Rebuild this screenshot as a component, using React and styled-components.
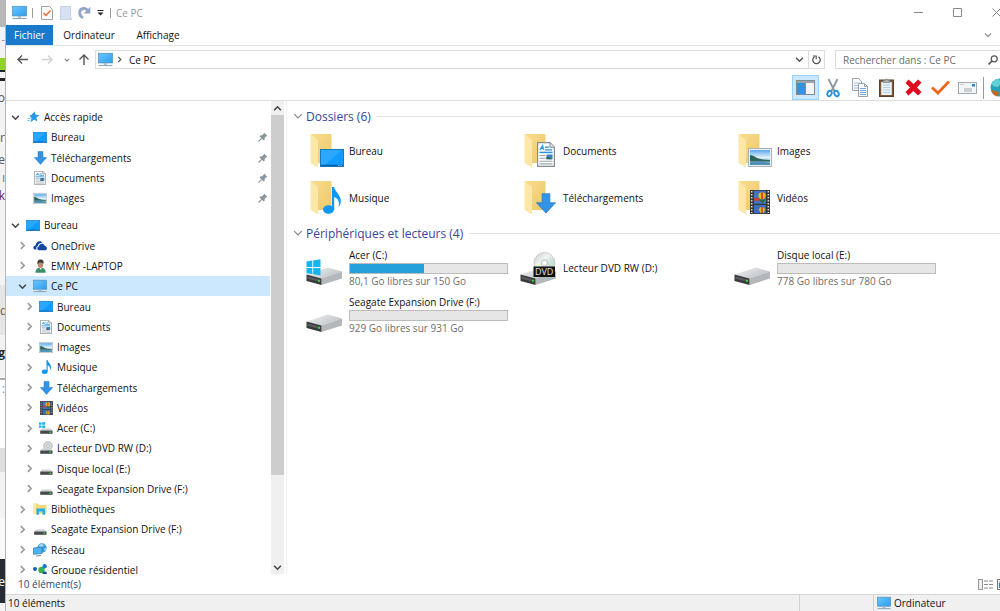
import React from 'react'
import styled, { createGlobalStyle, css } from 'styled-components'

const GlobalStyle = createGlobalStyle`
  * {
    box-sizing: border-box;
  }
  body {
    margin: 0;
    background: #fff;
    font-family: "Open Sans", "Noto Sans", sans-serif;
    font-size: 10px;
    color: #111;
    overflow: hidden;
  }
  button, input {
    font: inherit;
    color: inherit;
    margin: 0;
    padding: 0;
    border: 0;
    background: none;
  }
  ul {
    list-style: none;
    margin: 0;
    padding: 0;
  }
  svg {
    display: block;
    flex-shrink: 0;
  }
`;

//icons
const Chevron = ({ dir = 'down', size = 8, color = '#555', width = 1.4 }) => {
  const d = {
    down: 'M1 2.5 L4 5.5 L7 2.5',
    up: 'M1 5.5 L4 2.5 L7 5.5',
    right: 'M2.5 1 L5.5 4 L2.5 7',
  }[dir]
  return (
    <svg width={size} height={size} viewBox="0 0 8 8">
      <path d={d} fill="none" stroke={color} strokeWidth={width} />
    </svg>
  )
}

const MonitorIcon = ({ size = 14 }) => (
  <svg width={size} height={size} viewBox="0 0 14 14">
    <defs>
      <linearGradient id="screen" x1="0" y1="0" x2="1" y2="1">
        <stop offset="0" stopColor="#6cc8ff" />
        <stop offset="1" stopColor="#2a9df0" />
      </linearGradient>
    </defs>
    <rect x="0.5" y="1.2" width="13" height="9" fill="url(#screen)" stroke="#4f8fb8" strokeWidth="0.7" />
    <path d="M5.5 10.5h3v1.4h-3z" fill="#9fb4c2" />
    <path d="M0.5 12.6h13" stroke="#8fa9ba" strokeWidth="1.1" />
  </svg>
)

const DesktopIcon = ({ w = 14, h = 11 }) => (
  <svg width={w} height={h} viewBox="0 0 24 17" preserveAspectRatio="none">
    <rect x="0.5" y="0.5" width="23" height="16" fill="#0f9bff" stroke="#1679c4" />
    <path d="M1 1h21L5 15H1z" fill="#2aa8ff" />
    <path d="M1 15.5h22" stroke="#0b5e9e" strokeWidth="1.2" />
    <path d="M18 15.5h4" stroke="#9ed6ff" strokeWidth="0.8" strokeDasharray="1 0.6" />
  </svg>
)

const ArrowIcon = ({ w = 13, h = 14 }) => (
  <svg width={w} height={h} viewBox="0 0 13 14" preserveAspectRatio="none">
    <path d="M4 0.5h5v6h3.7L6.5 13.4 0.3 6.5H4z" fill="#3393e6" stroke="#2379c8" strokeWidth="0.5" />
  </svg>
)

const NoteIcon = ({ w = 13, h = 14 }) => (
  <svg width={w} height={h} viewBox="0 0 18 27">
    <ellipse cx="5.5" cy="22.5" rx="5.5" ry="4.3" fill="#0d98f5" />
    <path d="M9 0h2.2c0.5 5 7 7.5 6.6 14.5c-0.2 3-1.4 4.5-2.3 5.5c1.5-5-0.5-9-4.3-10v13H9z" fill="#0d98f5" />
  </svg>
)

const DocIcon = ({ w = 12, h = 14 }) => (
  <svg width={w} height={h} viewBox="0 0 18 24" preserveAspectRatio="none">
    <path d="M0.6 0.6h12.4l4.4 4.4v18.4H0.6z" fill="#fcfdfd" stroke="#858e93" strokeWidth="1.2" />
    <path d="M13 0.6v4.4h4.4" fill="#dfe5e8" stroke="#858e93" />
    <path d="M3 7.5L5.6 3.5 6.6 7.5M4 6.2h2.5M8 5h4M8 7.5h7" stroke="#2b94dc" strokeWidth="1.2" fill="none" />
    <path d="M2.5 10h13" stroke="#2b94dc" strokeWidth="1.4" />
    <path d="M2.5 13h6M2.5 15.5h6M2.5 18.5h13M2.5 21h13" stroke="#9aa5ab" />
    <rect x="9.5" y="12" width="6" height="4.5" fill="#3c84bd" />
    <path d="M9.5 16.5v-2l3 0.3 3 1.7z" fill="#2f5f4a" />
  </svg>
)

const PictureIcon = ({ w = 14, h = 11 }) => (
  <svg width={w} height={h} viewBox="0 0 24 19" preserveAspectRatio="none">
    <defs>
      <linearGradient id="sky" x1="0" y1="0" x2="0" y2="1">
        <stop offset="0" stopColor="#5ea6ea" />
        <stop offset="0.5" stopColor="#e0f1fb" />
        <stop offset="1" stopColor="#4f93b5" />
      </linearGradient>
    </defs>
    <rect x="0.5" y="0.5" width="23" height="18" fill="#eef1f3" stroke="#a9b1b6" />
    <rect x="2" y="2" width="20" height="15" fill="url(#sky)" />
    <path d="M2 7c4 0 6 3.5 13 4.5L22 12v1.5H2z" fill="#316458" />
    <path d="M2 14l9-1 11 2v2H2z" fill="#4f90b4" />
  </svg>
)

const FilmIcon = ({ w = 13, h = 14 }) => (
  <svg width={w} height={h} viewBox="0 0 20 24" preserveAspectRatio="none">
    <rect width="20" height="24" fill="#373737" />
    <path d="M1.7 1v22M18.3 1v22" stroke="#d8d8d8" strokeWidth="1.5" strokeDasharray="1.6 1.4" />
    <rect x="4" y="0.8" width="12" height="13" fill="#3f74c9" />
    <rect x="4" y="15" width="12" height="8.2" fill="#3c6ec0" />
    <path d="M4 8h4.500l1.500 2.800H4z" fill="#d63d31" />
    <path d="M8.300 5.500C8.300 1 15.700 1 15.700 5.500c0 1.800-1.500 3.200-2.300 4h-2.800c-0.800-0.800-2.300-2.200-2.300-4z" fill="#e8b91c" />
    <path d="M12 2.200v7.300" stroke="#cf3428" strokeWidth="1.600" />
    <path d="M8.500 9.500h7l-3 4z" fill="#2e6d38" />
    <path d="M9 20c0-4 6-4 6 0l-1.500 3h-3z" fill="#e8b91c" />
    <path d="M12 17v6" stroke="#cf3428" strokeWidth="1.400" />
  </svg>
)

const SmallDriveIcon = ({ kind }) => (
  <svg width="14" height="14" viewBox="0 0 14 14">
    {kind === 'dvd' && (
      <g>
        <circle cx="9" cy="5" r="4.3" fill="#d5d9db" stroke="#a5abae" strokeWidth="0.7" />
        <circle cx="9" cy="5" r="1.4" fill="#fff" stroke="#999" strokeWidth="0.6" />
      </g>
    )}
    {kind === 'win' && <path d="M0 1.5h2.6v2.300H0zM3.200 1.200h3v2.600h-3zM0 4.400h2.600v2.300H0zM3.200 4.400h3v2.600h-3z" fill="#18b4ee" />}
    <path d="M3 7.5h8.5L13.500 9.500H1.300z" fill="#ccd0d2" />
    <rect x="1.2" y="9.500" width="12.300" height="3.300" fill="#454a4c" />
    <rect x="10.500" y="10.500" width="1.600" height="1.300" fill="#3fe04b" />
  </svg>
)

const DriveIcon = ({ kind }) => (
  <svg width="38" height="36" viewBox="0 0 38 36">
    <defs>
      <linearGradient id="drv" x1="0" y1="0" x2="1" y2="0.6">
        <stop offset="0" stopColor="#f1f2f3" />
        <stop offset="1" stopColor="#c0c3c7" />
      </linearGradient>
      <linearGradient id="disc" x1="0" y1="0" x2="1" y2="1">
        <stop offset="0" stopColor="#c8cdd0" />
        <stop offset="0.4" stopColor="#f1f4f2" />
        <stop offset="0.6" stopColor="#cfe3da" />
        <stop offset="1" stopColor="#c3c7cc" />
      </linearGradient>
    </defs>
    <path d="M0.5 24.5L22 17.5 36 21.5 15.5 28.5z" fill="url(#drv)" />
    <path d="M15.5 28.5L36 21.500v7L15.500 35z" fill="#b4b7bb" />
    <path d="M0.5 24.5L15.500 28.500V35L0.500 31z" fill="#383a3c" />
    <path d="M1.500 26.500l10 2.600v2.200l-10-2.600z" fill="#5b5e61" />
    <circle cx="13" cy="30.800" r="1.200" fill="#2fd63d" />
    {kind === 'win' && <path d="M0.500 11.500l5.800-0.900v6.400H0.500zM7.200 10.400l7.300-1.200v7.800H7.200zM0.500 17.900h5.800v6.200l-5.800-0.900zM7.200 17.900h7.300v7.500l-7.300-1.100z" fill="#12b5f0" />}
    {kind === 'dvd' && (
      <g>
        <circle cx="24.500" cy="13" r="10.500" fill="url(#disc)" stroke="#b9bec1" strokeWidth="0.700" />
        <circle cx="24.500" cy="13" r="3.300" fill="#e9ecec" stroke="#b1b6b9" strokeWidth="0.700" />
        <circle cx="24.500" cy="13" r="1.300" fill="#fff" />
        <rect x="13.500" y="16.500" width="21.500" height="10.500" fill="#111" />
        <text x="24.200" y="25" fontSize="9" textAnchor="middle" fill="#e6e6e6" fontFamily="Open Sans, sans-serif">DVD</text>
      </g>
    )}
  </svg>
)

const StarIcon = () => (
  <svg width="13" height="12" viewBox="0 0 13 12">
    <path d="M7.5 0.5l1.2 3.3 3.8 0.2-3 2.4 0.8 4-3.3-2-3.5 2.6 1.2-3.8L3 5.5" fill="#2a9ae6" />
    <path d="M7.5 0.5l-1.5 3.4-3.7 0.4 2.7 2.500-1.500 4.200 4-3z" fill="#2a9ae6" />
    <path d="M0.500 7.500h3M0.500 9.500h2.500" stroke="#7fc4f2" />
  </svg>
)

const CloudIcon = () => (
  <svg width="14" height="11" viewBox="0 0 14 11">
    <path d="M0.3 7.8c0-1.5 1-2.4 2.2-2.4C2.8 3 4.5 1.3 6.5 1.3c1.2 0 2.2 0.5 3 1.4-3.5 0-4.6 2.3-4.6 3.4C3.5 6.5 3 8 3.5 9.5 1.5 9.9 0.3 9 0.3 7.8z" fill="#0f47a5" />
    <path d="M4.3 8.3c0-1.2 0.8-1.8 1.6-1.9C6.2 4.7 7.4 3.7 9 3.7s2.5 1 2.8 2.4c1.3 0.1 2.1 1 2.1 2.1S13.1 10.3 12 10.3H6.3c-1.2 0-2-0.9-2-2z" fill="#0f47a5" />
  </svg>
)

const UserIcon = () => (
  <svg width="13" height="14" viewBox="0 0 13 14">
    <path d="M1.5 13.8c0-4 2-5 5-5s5.2 1 5.2 5z" fill="#3d8f6c" />
    <path d="M5.2 8.5l1.5 2.5 1.5-2.5z" fill="#eee" />
    <ellipse cx="6.5" cy="5.5" rx="2.7" ry="3.5" fill="#b98c6d" />
    <path d="M3.5 5.5c-0.5-4 1-5 3.2-5s3.3 1.5 2.8 4C8 4 6 3 4.7 4z" fill="#3f3a35" />
  </svg>
)

const LibraryIcon = () => (
  <svg width="14" height="12" viewBox="0 0 14 12">
    <path d="M0.5 0.5h4l1 1.5H13.5v9h-13z" fill="#f8d775" />
    <path d="M0.5 0.5h2.5v11H0.5z" fill="#fbe9a8" />
    <path d="M3.5 11.8V5.5h8.5v6.3H9.5V8.5H6v3.3z" fill="#26aee8" />
  </svg>
)

const NetworkIcon = () => (
  <svg width="14" height="14" viewBox="0 0 14 14">
    <circle cx="9" cy="5" r="4.7" fill="#3b9ad9" />
    <path d="M6 2c2-1.5 4-1 5 0.5L9 4 6.5 4zM11 6l2-1.5c0.5 1.5 0 3-1 4z" fill="#a8daf5" />
    <path d="M0.5 5l8.5-1v6.5l-8.5 0.8z" fill="#4fb2f0" stroke="#2776b0" strokeWidth="0.7" />
    <path d="M3 13l5-0.6" stroke="#7d96a5" strokeWidth="1.2" />
  </svg>
)

const HomegroupIcon = () => (
  <svg width="14" height="12" viewBox="0 0 14 12">
    <circle cx="2" cy="5" r="2" fill="#1561b0" />
    <circle cx="8.5" cy="6" r="3.2" fill="#37b24a" />
    <circle cx="11.7" cy="2.3" r="2.2" fill="#1a7bc8" />
    <circle cx="11.7" cy="9.6" r="2.2" fill="#124f9c" />
  </svg>
)

const PinIcon = () => (
  <svg width="10" height="10" viewBox="0 0 10 10">
    <path d="M6 0.5L9.5 4 8.2 4.3 6.7 5.8 6.6 8 5.6 8.4 1.6 4.4 2 3.4 4.2 3.3 5.7 1.8z" fill="#8a949b" />
    <path d="M3.6 6.4L0.5 9.5" stroke="#8a949b" strokeWidth="1.1" />
  </svg>
)

const FolderWrap = styled.span`
  position: relative;
  flex: 0 0 38px;
`;

const FolderBadge = styled.span`
  position: absolute;
  right: 0;
  bottom: 3px;
  width: 24px;
  display: flex;
  justify-content: center;
`;

const FolderIcon = ({ children }) => (
  <FolderWrap>
    <svg width="38" height="38" viewBox="0 0 38 38">
      <defs>
        <linearGradient id="folder" x1="0" y1="0" x2="1" y2="1">
          <stop offset="0" stopColor="#f9dd8d" />
          <stop offset="1" stopColor="#edc76a" />
        </linearGradient>
      </defs>
      <path d="M5 2h20.500v29H10z" fill="url(#folder)" />
      <path d="M4.500 2l7.500 6v27.500L4.500 31z" fill="#fde7a6" />
    </svg>
    <FolderBadge>{children}</FolderBadge>
  </FolderWrap>
)

//layout
const Screen = styled.div`
  display: flex;
  min-height: 100vh;
  overflow: hidden;
`;

const Behind = styled.div`
  flex: 0 0 6px;
  display: flex;
  flex-direction: column;
  overflow: hidden;
  border-right: 1px solid #b4b4b4;
  background: #f3f3f3;
`;

const BehindPart = styled.div`
  flex: 0 0 ${p => p.$h}px;
  display: flex;
  align-items: center;
  justify-content: ${p => p.$align || 'flex-end'};
  overflow: hidden;
  white-space: nowrap;
  font-size: 12px;
  font-weight: ${p => (p.$bold ? 700 : 400)};
  color: ${p => p.$color || '#555'};
  background: ${p => p.$bg || 'transparent'};
`;

const Window = styled.div`
  flex: 1;
  min-width: 0;
  display: flex;
  flex-direction: column;
  overflow: hidden;
`;

const TitleBar = styled.header`
  display: flex;
  align-items: center;
  height: 25px;
  padding-left: 6px;
`;

const QuickButton = styled.button`
  display: flex;
  align-items: center;
  justify-content: center;
  width: ${p => p.$w || 19}px;
  height: 20px;
`;

const Divider = styled.span`
  width: 1px;
  height: ${p => p.$h || 10}px;
  margin: ${p => p.$m || '0'};
  background: #9a9a9a;
`;

const WindowTitle = styled.span`
  color: #999;
`;

const WindowButtons = styled.div`
  display: flex;
  margin: 0 -16px 0 auto;
`;

const WindowButton = styled.button`
  display: flex;
  align-items: center;
  justify-content: center;
  width: 39px;
  height: 24px;
`;

const Tabs = styled.nav`
  display: flex;
  align-items: stretch;
  height: 21px;
  border-bottom: 1px solid #e2e3e4;
`;

const Tab = styled.button`
  width: ${p => p.$w}px;
  ${p => p.$active && css`
    background: #1979ca;
    color: #fff;
  `}
`;

const TabsToggle = styled.button`
  display: flex;
  align-items: center;
  margin: 0 8px 0 auto;
`;

const AddressRow = styled.div`
  display: flex;
  align-items: center;
  height: 27px;
`;

const NavButton = styled.button`
  display: flex;
  align-items: center;
  justify-content: center;
  width: ${p => p.$w}px;
  height: 17px;
`;

const AddressBox = styled.div`
  flex: 1;
  display: flex;
  align-items: center;
  height: 19px;
  margin-left: 5px;
  padding-left: 2px;
  border: 1px solid #dcdcdc;
`;

const Crumb = styled.button`
  padding: 0 4px;
`;

const AddressActions = styled.div`
  display: flex;
  align-items: center;
  margin-left: auto;
`;

const RefreshButton = styled(NavButton)`
  border-left: 1px solid #dcdcdc;
`;

const SearchBox = styled.label`
  display: flex;
  align-items: center;
  width: 169px;
  height: 19px;
  margin: 0 -4px 0 10px;
  padding: 0 5px 0 7px;
  border: 1px solid #dcdcdc;
  input {
    flex: 1;
    min-width: 0;
    outline: none;
  }
  input::placeholder {
    color: #6d6d6d;
    opacity: 1;
  }
`;

const Toolbar = styled.div`
  display: flex;
  align-items: flex-end;
  justify-content: flex-end;
  height: 27px;
  margin-right: -13px;
`;

const Tool = styled.button`
  display: flex;
  align-items: center;
  justify-content: center;
  width: 27px;
  height: 25px;
  ${p => p.$active && css`
    background: #cce8ff;
    border: 1px solid #99d1ff;
  `}
`;

const Main = styled.main`
  flex: 1;
  display: flex;
  min-height: 0;
  border-top: 1px solid #dedede;
`;

const TreePane = styled.nav`
  display: flex;
  flex: 0 0 265px;
  height: 473px;
  overflow: hidden;
`;

const TreeList = styled.ul`
  flex: 1;
  display: flex;
  flex-direction: column;
  height: calc(100% + 6px);
  padding-top: 6px;
`;

const TreeItem = styled.li`
  flex: 1;
  display: flex;
  align-items: center;
  min-height: 20px;
  margin-top: ${p => (p.$gap ? 7 : 0)}px;
  margin-right: 1px;
  padding-left: ${p => p.$level * 7 + 5}px;
  background: ${p => (p.$active ? '#cce8ff' : 'transparent')};
`;

const TreeToggle = styled.button`
  display: flex;
  width: 9px;
  margin-right: ${p => p.$push}px;
  visibility: ${p => (p.$hidden ? 'hidden' : 'visible')};
`;

const TreeIcon = styled.span`
  display: flex;
  align-items: center;
  justify-content: center;
  width: 14px;
  height: 14px;
  margin-right: 4px;
`;

const TreeLabel = styled.span`
  flex: 1;
  white-space: nowrap;
`;

const PinSlot = styled.span`
  margin-right: 2px;
`;

const ScrollBar = styled.div`
  flex: 0 0 13px;
  display: flex;
  flex-direction: column;
  align-self: flex-start;
  height: 473px;
  margin-right: 2px;
  background: #f0f0f0;
`;

const ScrollButton = styled.button`
  display: flex;
  align-items: center;
  justify-content: center;
  height: 14px;
`;

const ScrollTrack = styled.div`
  flex: 1;
  &::before {
    content: '';
    display: block;
    height: 81%;
    background: #cdcdcd;
  }
`;

const Content = styled.div`
  flex: 1;
  min-width: 0;
  padding: 4px 0 0 6px;
  border-left: 1px solid #f0f0f0;
`;

const SectionTitle = styled.h2`
  display: flex;
  align-items: center;
  gap: 3px;
  height: 22px;
  margin: 0;
  font-size: 12px;
  font-weight: 400;
  color: #36459c;
  white-space: nowrap;
  &::after {
    content: '';
    flex: 1;
    height: 1px;
    margin-left: 3px;
    background: #e4e4e4;
  }
`;

const Grid = styled.ul`
  display: grid;
  grid-template-columns: repeat(auto-fill, 214px);
  grid-auto-rows: 47px;
  padding: 0 0 1px 13px;
`;

const Cell = styled.li`
  display: flex;
  align-items: center;
  gap: 5px;
  white-space: nowrap;
`;

const DriveInfo = styled.div`
  width: 159px;
  line-height: 16px;
`;

const Meter = styled.div`
  height: 11px;
  border: 1px solid #bcbcbc;
  background: #e6e6e6;
`;

const MeterFill = styled.div`
  height: 100%;
  background: #26a0da;
`;

const Free = styled.div`
  line-height: 14px;
  color: #6d6d6d;
`;

const CountBar = styled.div`
  display: flex;
  align-items: center;
  height: 20px;
  padding-left: 12px;
  color: #2b4a76;
`;

const ViewButtons = styled.div`
  display: flex;
  gap: 4px;
  margin: 0 -12px 0 auto;
`;

const StatusBar = styled.footer`
  display: flex;
  align-items: center;
  height: 17px;
  padding-left: 2px;
  border-top: 1px solid #d6d6d6;
  background: #f0f0f0;
`;

const StatusCell = styled.span`
  display: flex;
  align-items: center;
  gap: 3px;
  width: ${p => p.$w}px;
  height: 16px;
  padding-left: 3px;
  border-left: 1px solid #d2d2d2;
`;

const Spacer = styled.span`
  flex: 1;
`;

//data
const icons = {
  star: <StarIcon />,
  desktop: <DesktopIcon />,
  download: <ArrowIcon />,
  doc: <DocIcon />,
  picture: <PictureIcon />,
  music: <NoteIcon />,
  film: <FilmIcon />,
  cloud: <CloudIcon />,
  user: <UserIcon />,
  pc: <MonitorIcon />,
  win: <SmallDriveIcon kind="win" />,
  dvd: <SmallDriveIcon kind="dvd" />,
  drive: <SmallDriveIcon />,
  library: <LibraryIcon />,
  network: <NetworkIcon />,
  group: <HomegroupIcon />,
}

const tree = [
  { label: 'Accès rapide', icon: 'star', level: 0, open: true },
  { label: 'Bureau', icon: 'desktop', level: 1, pin: true },
  { label: 'Téléchargements', icon: 'download', level: 1, pin: true },
  { label: 'Documents', icon: 'doc', level: 1, pin: true },
  { label: 'Images', icon: 'picture', level: 1, pin: true },
  { label: 'Bureau', icon: 'desktop', level: 0, open: true, gap: true },
  { label: 'OneDrive', icon: 'cloud', level: 1 },
  { label: 'EMMY -LAPTOP', icon: 'user', level: 1 },
  { label: 'Ce PC', icon: 'pc', level: 1, open: true, active: true },
  { label: 'Bureau', icon: 'desktop', level: 2 },
  { label: 'Documents', icon: 'doc', level: 2 },
  { label: 'Images', icon: 'picture', level: 2 },
  { label: 'Musique', icon: 'music', level: 2 },
  { label: 'Téléchargements', icon: 'download', level: 2 },
  { label: 'Vidéos', icon: 'film', level: 2 },
  { label: 'Acer (C:)', icon: 'win', level: 2 },
  { label: 'Lecteur DVD RW (D:)', icon: 'dvd', level: 2 },
  { label: 'Disque local (E:)', icon: 'drive', level: 2 },
  { label: 'Seagate Expansion Drive (F:)', icon: 'drive', level: 2 },
  { label: 'Bibliothèques', icon: 'library', level: 1 },
  { label: 'Seagate Expansion Drive (F:)', icon: 'drive', level: 1 },
  { label: 'Réseau', icon: 'network', level: 1 },
  { label: 'Groupe résidentiel', icon: 'group', level: 1 },
]

const folders = [
  { label: 'Bureau', badge: <DesktopIcon w={24} h={18} /> },
  { label: 'Documents', badge: <DocIcon w={18} h={25} /> },
  { label: 'Images', badge: <PictureIcon w={24} h={19} /> },
  { label: 'Musique', badge: <NoteIcon w={18} h={27} /> },
  { label: 'Téléchargements', badge: <ArrowIcon w={20} h={21} /> },
  { label: 'Vidéos', badge: <FilmIcon w={20} h={24} /> },
]

const drives = [
  { label: 'Acer (C:)', kind: 'win', used: 47, free: '80,1 Go libres sur 150 Go' },
  { label: 'Lecteur DVD RW (D:)', kind: 'dvd' },
  { label: 'Disque local (E:)', used: 0, free: '778 Go libres sur 780 Go' },
  { label: 'Seagate Expansion Drive (F:)', used: 0, free: '929 Go libres sur 931 Go' },
]

//edge of the page left open behind the window
const behind = [
  { h: 27, bg: '#b9b9b9' },
  { h: 24, text: '-', color: '#999' },
  { h: 7 },
  { h: 12, bg: '#8fd22c' },
  { h: 2, bg: '#20242b' },
  { h: 6 },
  { h: 3, bg: '#20242b' },
  { h: 32, text: 'o' },
  { h: 10 },
  { h: 28, text: 'r' },
  { h: 16, text: 'e' },
  { h: 20, text: 'ı', color: '#2b86c9' },
  { h: 16, text: 'k', color: '#6b2a68' },
  { h: 82 },
  { h: 50, bg: '#e6e6e6', text: 'd', align: 'flex-start' },
  { h: 34, text: 'g', color: '#222', bold: true },
  { h: 9 },
  { h: 2, bg: '#aaa' },
  { h: 16, bg: '#fff', text: ':', color: '#4d9fd6' },
  { h: 52, bg: '#fff' },
  { h: 24, bg: '#dedede' },
  { h: 46 },
  { h: 41, bg: '#fafafa' },
  { h: 44, bg: '#272b33', text: 'te', color: '#fff' },
]

const pushes = [6, 6, 5]

const App = () => {
  return (
    <Screen>
      <GlobalStyle />
      <Behind>
        {behind.map((b, i) => (
          <BehindPart key={i} $h={b.h} $bg={b.bg} $color={b.color} $bold={b.bold} $align={b.align}>{b.text}</BehindPart>
        ))}
      </Behind>
      <Window>
        <TitleBar>
          <MonitorIcon size={15} />
          <Divider $m="0 4px 0 5px" />
          <QuickButton aria-label="Propriétés">
            <svg width="12" height="14" viewBox="0 0 12 14">
              <path d="M0.5 0.5h8l3 3v10H0.5z" fill="#fafafa" stroke="#a3a3a3" />
              <path d="M2.5 7l2.3 2.5L9.5 4.5" fill="none" stroke="#ec6a2c" strokeWidth="1.5" />
            </svg>
          </QuickButton>
          <QuickButton aria-label="Nouveau dossier">
            <svg width="12" height="14" viewBox="0 0 12 14">
              <path d="M0.5 0.5h10v10l1 3h-11z" fill="#d6e0f2" stroke="#c3d0e8" />
            </svg>
          </QuickButton>
          <QuickButton aria-label="Rétablir">
            <svg width="13" height="13" viewBox="0 0 13 13">
              <path d="M5 11.8C0.5 9.500 0.500 3 5.500 2.500c2-0.200 3.500 0.800 4.300 2.200" fill="none" stroke="#93a6c6" strokeWidth="2.800" />
              <path d="M12.300 0.800v6.700H5.500z" fill="#93a6c6" />
            </svg>
          </QuickButton>
          <QuickButton $w={12} aria-label="Personnaliser">
            <svg width="7" height="6" viewBox="0 0 7 6">
              <path d="M0.5 0.5h6" stroke="#222" />
              <path d="M0.5 2.5h6l-3 3z" fill="#222" />
            </svg>
          </QuickButton>
          <Divider $m="0 5px 0 4px" />
          <WindowTitle>Ce PC</WindowTitle>
          <WindowButtons>
            <WindowButton aria-label="Réduire">
              <svg width="9" height="9" viewBox="0 0 9 9"><path d="M0 4.5h9" stroke="#888" /></svg>
            </WindowButton>
            <WindowButton aria-label="Agrandir">
              <svg width="9" height="9" viewBox="0 0 9 9"><path d="M0.5 0.5h8v8h-8z" fill="none" stroke="#888" /></svg>
            </WindowButton>
            <WindowButton aria-label="Fermer">
              <svg width="9" height="9" viewBox="0 0 9 9"><path d="M0.5 0.5l8 8M8.5 0.5l-8 8" stroke="#888" /></svg>
            </WindowButton>
          </WindowButtons>
        </TitleBar>

        <Tabs>
          <Tab $w={47} $active>Fichier</Tab>
          <Tab $w={72}>Ordinateur</Tab>
          <Tab $w={66}>Affichage</Tab>
          <TabsToggle aria-label="Développer le ruban"><Chevron color="#999" /></TabsToggle>
        </Tabs>

        <AddressRow>
          <NavButton $w={32} aria-label="Précédent">
            <svg width="11" height="9" viewBox="0 0 11 9"><path d="M5 0.5L1 4.5l4 4M1 4.5h10" fill="none" stroke="#555" strokeWidth="1.4" /></svg>
          </NavButton>
          <NavButton $w={18} aria-label="Suivant">
            <svg width="11" height="9" viewBox="0 0 11 9"><path d="M6 0.5l4 4-4 4M10 4.5H0" fill="none" stroke="#d0d0d0" strokeWidth="1.4" /></svg>
          </NavButton>
          <NavButton $w={22} aria-label="Emplacements récents"><Chevron size={6} color="#777" /></NavButton>
          <NavButton $w={12} aria-label="Dossier parent">
            <svg width="10" height="11" viewBox="0 0 10 11"><path d="M0.5 5.5L5 1l4.5 4.5M5 1v10" fill="none" stroke="#555" strokeWidth="1.4" /></svg>
          </NavButton>
          <AddressBox>
            <MonitorIcon size={15} />
            <NavButton $w={12} aria-label="Sous-dossiers"><Chevron dir="right" size={7} /></NavButton>
            <Crumb>Ce PC</Crumb>
            <AddressActions>
              <NavButton $w={18} aria-label="Historique"><Chevron size={9} /></NavButton>
              <RefreshButton $w={16} aria-label="Actualiser">
                <svg width="9" height="10" viewBox="0 0 9 10">
                  <path d="M2.5 1.8A3.7 3.7 0 1 0 6.5 1.8" fill="none" stroke="#555" strokeWidth="1.3" />
                  <path d="M1 1h3.2v3.2" fill="none" stroke="#555" strokeWidth="1.2" />
                </svg>
              </RefreshButton>
            </AddressActions>
          </AddressBox>
          <SearchBox>
            <input type="text" placeholder="Rechercher dans : Ce PC" aria-label="Rechercher" />
            <svg width="10" height="10" viewBox="0 0 10 10">
              <circle cx="6.2" cy="3.8" r="3" fill="none" stroke="#555" strokeWidth="1.3" />
              <path d="M4 6L0.6 9.4" stroke="#555" strokeWidth="1.6" />
            </svg>
          </SearchBox>
        </AddressRow>

        <Toolbar>
          <Tool $active aria-label="Volet de navigation">
            <svg width="19" height="15" viewBox="0 0 19 15">
              <rect x="0.5" y="0.5" width="18" height="14" fill="#f5f5f5" stroke="#7f8b93" />
              <path d="M1 1h17v2H1z" fill="#9aa4ab" />
              <path d="M1 3h8v11H1z" fill="#3294e0" />
              <path d="M9.5 3v11" stroke="#7f8b93" />
            </svg>
          </Tool>
          <Tool aria-label="Couper">
            <svg width="14" height="20" viewBox="0 0 14 20">
              <path d="M2.5 1l6 12M11.5 1L5.5 13" stroke="#8d979e" strokeWidth="1.8" fill="none" />
              <ellipse cx="3.5" cy="15.5" rx="2.1" ry="2.8" fill="none" stroke="#2492dc" strokeWidth="1.9" transform="rotate(25 3.5 15.5)" />
              <ellipse cx="10.5" cy="15.5" rx="2.1" ry="2.8" fill="none" stroke="#2492dc" strokeWidth="1.9" transform="rotate(-25 10.5 15.5)" />
            </svg>
          </Tool>
          <Tool aria-label="Copier">
            <svg width="16" height="19" viewBox="0 0 16 19">
              <path d="M0.5 0.5h6l3 3v9h-9z" fill="#fbfcfd" stroke="#98a3ab" />
              <path d="M2 5h6M2 7.5h6M2 10h6" stroke="#9cc3ec" />
              <path d="M6.5 5.5h6l3 3v10h-9z" fill="#fbfcfd" stroke="#98a3ab" />
              <path d="M12.5 5.5v3h3" fill="none" stroke="#98a3ab" />
              <path d="M8 10.5h6M8 12.5h6M8 14.5h6M8 16.5h6" stroke="#6fa5e6" />
            </svg>
          </Tool>
          <Tool aria-label="Coller">
            <svg width="15" height="19" viewBox="0 0 15 19">
              <rect x="0.5" y="2" width="14" height="16.5" fill="#7b5937" stroke="#5b4129" />
              <rect x="2.2" y="4" width="10.6" height="13" fill="#eaf3fa" />
              <path d="M4 7h7M4 9.5h7M4 12h7M4 14.5h7" stroke="#b6cfe2" />
              <path d="M4 4.5V2.5h2a1.5 1.5 0 0 1 3 0h2v2z" fill="#a9b0b4" stroke="#747b80" strokeWidth="0.7" />
            </svg>
          </Tool>
          <Tool aria-label="Supprimer">
            <svg width="17" height="17" viewBox="0 0 17 17">
              <path d="M3.5 0.5l5 4.5 4.5-4.5 3.5 3-4.5 5 4.5 4.5-3.5 3.500-4.700-4.500-4.800 4.500-3-3.500 4.500-4.500-4.500-4.500z" fill="#e00b1c" />
            </svg>
          </Tool>
          <Tool aria-label="Renommer">
            <svg width="19" height="15" viewBox="0 0 19 15">
              <path d="M1 7.5l6 5.5L18 1.5" fill="none" stroke="#f2661b" strokeWidth="2.8" />
            </svg>
          </Tool>
          <Tool aria-label="Envoyer">
            <svg width="19" height="12" viewBox="0 0 19 12">
              <rect x="0.5" y="0.5" width="18" height="11" fill="#f4f5f6" stroke="#a2a9ae" />
              <rect x="14" y="2" width="3" height="2.5" fill="#2b7fe0" />
              <path d="M6 7h8M6 9h8" stroke="#a2a9ae" />
              <path d="M2 2.5h4" stroke="#ccc" />
            </svg>
          </Tool>
          <Divider $h={22} $m="0 2px 1px 2px" />
          <Tool aria-label="Internet">
            <svg width="19" height="19" viewBox="0 0 19 19">
              <circle cx="9.5" cy="9.5" r="9" fill="#25a3b5" />
              <path d="M1.5 6C3 2.5 6 1 9 1l2 4-3 4-4-0.5z" fill="#62d1d6" />
              <path d="M1 12l8 2-1 4.5C4 18 2 15.5 1 12z" fill="#bf6a28" />
            </svg>
          </Tool>
        </Toolbar>

        <Main>
          <TreePane aria-label="Volet de navigation">
            <TreeList>
              {tree.map((t, i) => (
                <TreeItem key={i} $level={t.level} $gap={t.gap} $active={t.active}>
                  <TreeToggle
                    $hidden={t.pin}
                    $push={pushes[t.level]}
                    aria-label={t.label}
                  >
                    <Chevron dir={t.open ? 'down' : 'right'} size={9} color={t.open ? '#444' : '#999'} />
                  </TreeToggle>
                  <TreeIcon>{icons[t.icon]}</TreeIcon>
                  <TreeLabel>{t.label}</TreeLabel>
                  {t.pin && <PinSlot><PinIcon /></PinSlot>}
                </TreeItem>
              ))}
            </TreeList>
          </TreePane>
          <ScrollBar>
            <ScrollButton aria-label="Haut"><Chevron dir="up" size={9} color="#444" /></ScrollButton>
            <ScrollTrack />
            <ScrollButton aria-label="Bas"><Chevron size={9} color="#444" /></ScrollButton>
          </ScrollBar>
          <Content>
            <SectionTitle><Chevron size={10} color="#888" width={1} />Dossiers (6)</SectionTitle>
            <Grid>
              {folders.map(f => (
                <Cell key={f.label}>
                  <FolderIcon>{f.badge}</FolderIcon>
                  {f.label}
                </Cell>
              ))}
            </Grid>
            <SectionTitle><Chevron size={10} color="#888" width={1} />Périphériques et lecteurs (4)</SectionTitle>
            <Grid>
              {drives.map(d => (
                <Cell key={d.label}>
                  <DriveIcon kind={d.kind} />
                  {d.free ? (
                    <DriveInfo>
                      {d.label}
                      <Meter><MeterFill style={{ width: `${d.used}%` }} /></Meter>
                      <Free>{d.free}</Free>
                    </DriveInfo>
                  ) : d.label}
                </Cell>
              ))}
            </Grid>
          </Content>
        </Main>

        <CountBar>
          10 élément(s)
          <ViewButtons>
            <button aria-label="Détails">
              <svg width="15" height="11" viewBox="0 0 15 11">
                <rect x="0.5" y="0.5" width="4" height="10" fill="#eee" stroke="#999" />
                <path d="M6 2h9M6 5.5h9M6 9h9" stroke="#888" strokeDasharray="4 1" />
              </svg>
            </button>
            <button aria-label="Grandes icônes">
              <svg width="15" height="11" viewBox="0 0 15 11">
                <rect x="0.5" y="0.5" width="14" height="10" fill="#eee" stroke="#777" />
                <path d="M2 3l6 6H2z" fill="#3f7fae" />
              </svg>
            </button>
          </ViewButtons>
        </CountBar>
        <StatusBar>
          10 éléments
          <Spacer />
          <StatusCell $w={74} />
          <StatusCell $w={127}><MonitorIcon size={14} />Ordinateur</StatusCell>
        </StatusBar>
      </Window>
    </Screen>
  )
}

export default App
